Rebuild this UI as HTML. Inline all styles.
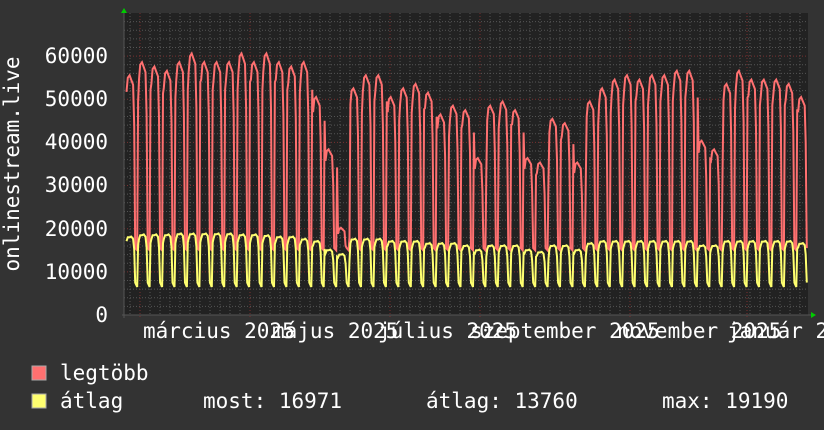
<!DOCTYPE html>
<html><head><meta charset="utf-8"><style>
html,body{margin:0;padding:0;background:#333;}
body{width:824px;height:430px;overflow:hidden;position:relative;font-family:"DejaVu Sans Mono","Liberation Mono",monospace;color:#fff;}
svg{position:absolute;left:0;top:0;}
</style></head><body>
<svg id="g" width="824" height="430" xmlns="http://www.w3.org/2000/svg" font-family="DejaVu Sans Mono, Liberation Mono, monospace" font-size="21" fill="#fff">
<rect x="124" y="13" width="684" height="302" fill="#222"/>
<g id="grid"></g>
<polyline id="red" fill="none" stroke="#ff7070" stroke-width="2" points=""/>
<polyline id="yel" fill="none" stroke="#ffff70" stroke-width="2" points=""/>
<line x1="122" y1="315" x2="812" y2="315" stroke="#555"/>
<line x1="124" y1="10" x2="124" y2="318" stroke="#555"/>
<polygon points="121,13 127,13 124,8" fill="#0c0"/>
<polygon points="811,312 811,318 816,315" fill="#0c0"/>
<g text-anchor="end">
<text x="108" y="63">60000</text>
<text x="108" y="106">50000</text>
<text x="108" y="149">40000</text>
<text x="108" y="192">30000</text>
<text x="108" y="236">20000</text>
<text x="108" y="279">10000</text>
<text x="108" y="322">0</text>
</g>
<text transform="translate(19,164) rotate(-90)" text-anchor="middle">onlinestream.live</text>
<text x="143" y="338">március 2025</text>
<text x="272" y="338">május 2025</text>
<text x="378" y="338">július 2025</text>
<text x="470" y="338">szeptember 2025</text>
<text x="617" y="338">november 2025</text>
<text x="727" y="338">január 2026</text>
<rect x="32" y="366" width="14" height="14" fill="#ff7070" stroke="#aaa" stroke-width="1"/>
<text x="60" y="380">legtöbb</text>
<rect x="32" y="394" width="14" height="14" fill="#ffff70" stroke="#aaa" stroke-width="1"/>
<text x="60" y="408">átlag</text>
<text x="203" y="408">most: 16971</text>
<text x="426" y="408">átlag: 13760</text>
<text x="662" y="408">max: 19190</text>
</svg>
<script>
(function(){
var NS="http://www.w3.org/2000/svg",g=document.getElementById('grid');
function ln(x1,y1,x2,y2,c){var l=document.createElementNS(NS,'line');l.setAttribute('x1',x1);l.setAttribute('y1',y1);l.setAttribute('x2',x2);l.setAttribute('y2',y2);l.setAttribute('stroke',c);l.setAttribute('stroke-dasharray','1,2');g.appendChild(l);}
function Y(v){return 315-v*0.004315;}
for(var v=2000;v<=68000;v+=2000){ln(124,Y(v),808,Y(v),(v%10000==0)?'#7a3030':'#555');}
for(var x=130;x<808;x+=10){ln(x,13,x,315,'#555');}
[140,250,390,480,630,747].forEach(function(x){ln(x,13,x,318,'#7a3030');});
var lv=[55,58,57,56,58,60,58,58,58,60,58,60,58,57,58,50,38,20,52,55,55,50,52,53,51,46,48,47,36,48,49,47,36,35,45,44,35,49,52,54,55,54,55,55,56,56,40,38,53,56,54,54,54,53,50,54,55,20,37,42,40,54,54];
var yl=[18,18.5,18.5,18.5,18.7,18.7,18.7,18.7,18.7,18.5,18.5,18.3,18,18,17.5,17,15,14,17.5,17.5,17.5,17,17,17,16.5,16.5,16.5,16,15,16,16,16,15,14.5,16,16,15,16.5,17,17,17,17,17,17,17,17,16,16,17,17,17,17,17,17,16.5,17,17,13,14,15,15,17,17];
var r=[],y=[],w=684/55,x0=126;
for(var i=0;i<lv.length;i++){
 var bx=x0+i*w;if(bx>806)break;
 var d=w/7,h=lv[i]*1000,ya=yl[i]*1000;
 var pts=[[0.3,h*0.94,ya*0.95],[1,h,ya],[2,h*1.01,ya],[3,h*0.99,ya*1.01],[4,h*0.97,ya*0.98],[4.6,h*0.8,ya*0.85],[5.2,15500,7500],[6.3,15000,6500],[6.8,h*0.9,ya*0.9]];
 if(i>=57&&i<=60){pts.forEach(function(p){p[2]=p[2]*0.8;});}
 pts.forEach(function(p){var xx=bx+p[0]*d;if(xx<=807){r.push(xx.toFixed(1)+','+Y(p[1]).toFixed(1));y.push(xx.toFixed(1)+','+Y(p[2]).toFixed(1));}});
}
document.getElementById('red').setAttribute('points',r.join(' '));
document.getElementById('yel').setAttribute('points',y.join(' '));
})();
</script>
</body></html>
